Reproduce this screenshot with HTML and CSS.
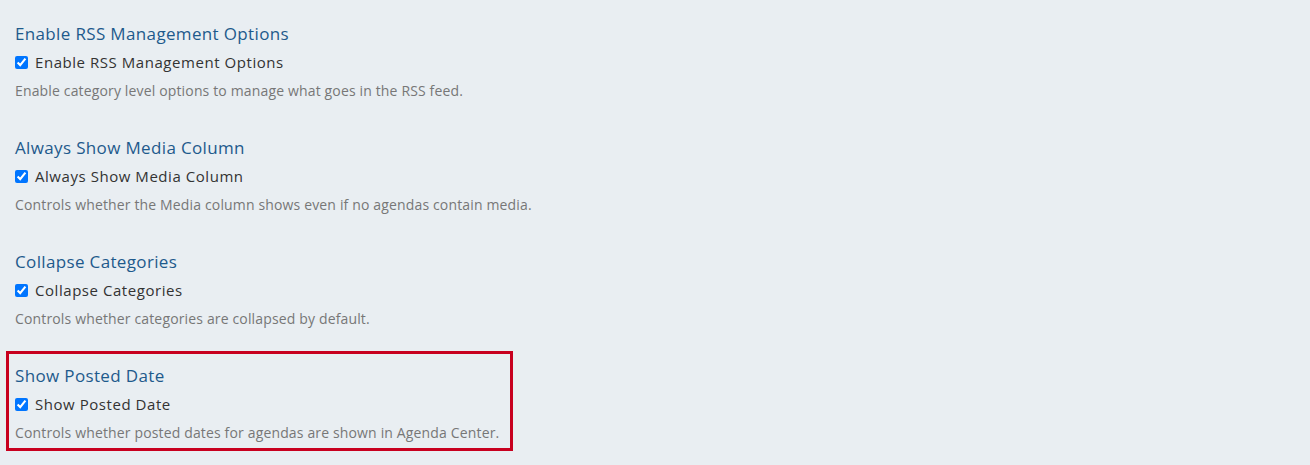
FILE: index.html
```html
<!DOCTYPE html>
<html lang="en">
<head>
<meta charset="utf-8">
<title>Agenda Center Options</title>
<link rel="stylesheet" href="styles.css">
</head>
<body>
<div class="page">
  <div class="option">
    <h3 class="option-title">Enable RSS Management Options</h3>
    <label class="option-check"><input type="checkbox" checked> <span>Enable RSS Management Options</span></label>
    <p class="option-desc">Enable category level options to manage what goes in the RSS feed.</p>
  </div>
  <div class="option">
    <h3 class="option-title">Always Show Media Column</h3>
    <label class="option-check"><input type="checkbox" checked> <span>Always Show Media Column</span></label>
    <p class="option-desc">Controls whether the Media column shows even if no agendas contain media.</p>
  </div>
  <div class="option">
    <h3 class="option-title">Collapse Categories</h3>
    <label class="option-check"><input type="checkbox" checked> <span>Collapse Categories</span></label>
    <p class="option-desc">Controls whether categories are collapsed by default.</p>
  </div>
  <div class="option option-highlight">
    <h3 class="option-title">Show Posted Date</h3>
    <label class="option-check"><input type="checkbox" checked> <span>Show Posted Date</span></label>
    <p class="option-desc">Controls whether posted dates for agendas are shown in Agenda Center.</p>
  </div>
</div>
</body>
</html>
```

FILE: styles.css
```css
html, body {
  margin: 0;
  padding: 0;
  background: #e9eef2;
}
body {
  font-family: "Open Sans", "Noto Sans", sans-serif;
  color: #333;
}
.page {
  padding: 9px 0 0 6px;
  display: flex;
  flex-direction: column;
  gap: 14px;
}
.option {
  box-sizing: border-box;
  width: 507px;
  border: 3px solid transparent;
  padding: 10px 6px 5px 6px;
}
.option-highlight {
  border-color: #c8001f;
}
.option-title {
  margin: 0;
  font-size: 17px;
  line-height: 24px;
  font-weight: 400;
  letter-spacing: 0.35px;
  color: #1e5a8c;
  white-space: nowrap;
}
.option-check {
  margin-top: 6px;
  display: flex;
  align-items: center;
  gap: 7px;
  font-size: 15px;
  line-height: 20px;
  letter-spacing: 0.55px;
  color: #333;
  white-space: nowrap;
}
.option-check input {
  margin: 0;
  width: 13px;
  height: 13px;
}
.option-desc {
  margin: 9px 0 0 0;
  font-size: 14px;
  line-height: 20px;
  letter-spacing: 0.15px;
  color: #777;
  white-space: nowrap;
}
```
